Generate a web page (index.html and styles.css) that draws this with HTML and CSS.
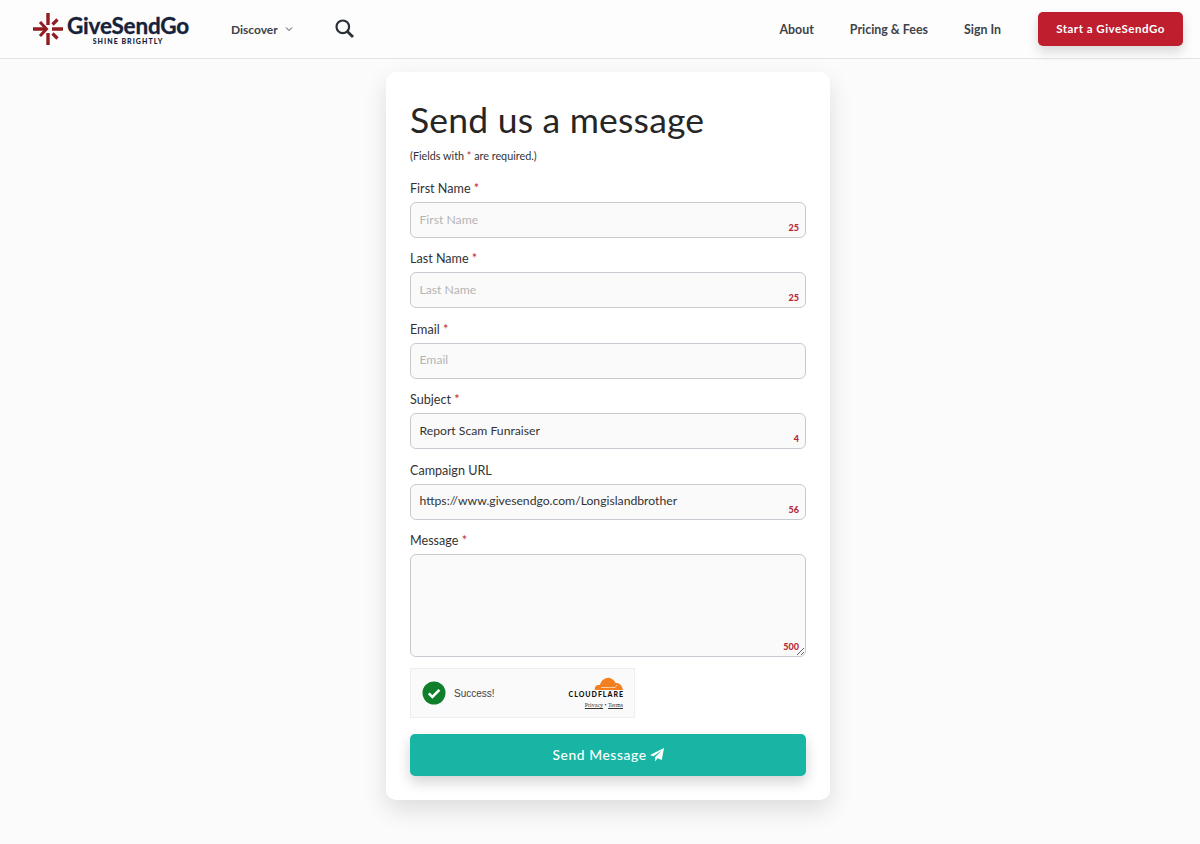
FILE: index.html
```html
<!DOCTYPE html>
<html lang="en">
<head>
    <meta charset="UTF-8">
    <meta name="viewport" content="width=device-width, initial-scale=1.0">
    <title>Contact - GiveSendGo</title>
    <link rel="stylesheet" href="styles.css">
</head>
<body>
    <nav class="navbar">
        <a class="logo" href="#">
            <svg class="logo-mark" width="32" height="32" viewBox="0 0 32 32">
                <g stroke="#8f1d22" fill="none">
                    <path d="M16 0V12M16 20V32" stroke-width="3.4"/>
                    <path d="M1 16H13M20 16H31" stroke-width="3.4"/>
                    <path d="M8 9L14.500 16L8 23" stroke-width="3"/>
                    <path d="M20.500 11.500L25.500 6.500M20.500 20.500L25.500 25.500" stroke-width="3.2"/>
                </g>
            </svg>
            <span class="logo-text">
                <span class="logo-name">GiveSendGo</span>
                <span class="logo-tag">SHINE BRIGHTLY</span>
            </span>
        </a>
        <a class="nav-link discover" href="#">
            Discover
            <svg width="8" height="6" viewBox="0 0 8 6"><path d="M1 1.5L4 4.5L7 1.5" fill="none" stroke="#444" stroke-width="1"/></svg>
        </a>
        <a class="search" href="#">
            <svg width="19" height="19" viewBox="0 0 19 19"><circle cx="7.800" cy="7.800" r="6.300" fill="none" stroke="#2b2f36" stroke-width="2.200"/><path d="M12.400 12.400L18 18" stroke="#2b2f36" stroke-width="2.800"/></svg>
        </a>
        <div class="nav-right">
            <a class="nav-link" href="#">About</a>
            <a class="nav-link" href="#">Pricing &amp; Fees</a>
            <a class="nav-link" href="#">Sign In</a>
            <a class="start-btn" href="#">Start a GiveSendGo</a>
        </div>
    </nav>

    <div class="content">
        <form class="card">
            <h1>Send us a message</h1>
            <p class="note">(Fields with <span class="req">*</span> are required.)</p>

            <div class="field">
                <label>First Name <span class="req">*</span></label>
                <input type="text" placeholder="First Name">
                <span class="count">25</span>
            </div>
            <div class="field">
                <label>Last Name <span class="req">*</span></label>
                <input type="text" placeholder="Last Name">
                <span class="count">25</span>
            </div>
            <div class="field">
                <label>Email <span class="req">*</span></label>
                <input type="text" placeholder="Email">
            </div>
            <div class="field">
                <label>Subject <span class="req">*</span></label>
                <input type="text" value="Report Scam Funraiser">
                <span class="count">4</span>
            </div>
            <div class="field">
                <label>Campaign URL</label>
                <input type="text" value="https://www.givesendgo.com/Longislandbrother">
                <span class="count">56</span>
            </div>
            <div class="field">
                <label>Message <span class="req">*</span></label>
                <textarea></textarea>
                <span class="count">500</span>
            </div>

            <div class="captcha">
                <svg width="24" height="24" viewBox="0 0 24 24"><circle cx="12" cy="12" r="11.5" fill="#0f7f2c"/><path d="M6.8 12.4L10.4 16L17.4 8.8" fill="none" stroke="#fff" stroke-width="2.6"/></svg>
                <span class="captcha-text">Success!</span>
                <div class="cf">
                    <svg width="30" height="13" viewBox="0 0 30 13"><path d="M2 13C1 9 4 7.500 7 8C8 3 13 0 17 1C20 2 22 4 22.500 6C26 5.500 29 8 30 13Z" fill="#f38020"/><path d="M8 10.500H22L24 8" fill="none" stroke="#fbe3c8" stroke-width="0.8"/></svg>
                    <span class="cf-name">CLOUDFLARE</span>
                    <span class="cf-links"><u>Privacy</u> &bull; <u>Terms</u></span>
                </div>
            </div>

            <button class="send-btn" type="button">
                Send Message
                <svg width="14" height="14" viewBox="0 0 14 14"><path d="M14 0L11.800 12L7.500 10.200L5.300 13.500L5 9.200L11.500 2.800L3.400 8.300L0 6.900Z" fill="#fff"/></svg>
            </button>
        </form>
    </div>
</body>
</html>
```

FILE: styles.css
```css
* {
    box-sizing: border-box;
}

body {
    margin: 0;
    background-color: #fbfbfb;
    font-family: 'Lato', 'Open Sans', sans-serif;
    color: #2b2b2b;
}

a {
    text-decoration: none;
}

.navbar {
    display: flex;
    align-items: center;
    height: 59px;
    padding: 0 17px 0 32px;
    background-color: #fdfdfd;
    border-bottom: 1px solid #e4e4e4;
}

.logo {
    display: flex;
    align-items: center;
    gap: 3px;
    width: 199px;
}

.logo-text {
    display: flex;
    flex-direction: column;
    align-items: center;
    padding-top: 3px;
}

.logo-name {
    font-size: 22.500px;
    line-height: 20px;
    font-weight: 700;
    letter-spacing: -0.2px;
    color: #16213a;
    -webkit-text-stroke: 0.3px #16213a;
}

.logo-tag {
    margin-top: 1px;
    font-size: 7px;
    line-height: 8px;
    font-weight: 900;
    letter-spacing: 1.050px;
    color: #16213a;
}

.nav-link {
    font-size: 12.400px;
    font-weight: 700;
    color: #3f4248;
}

.discover {
    display: flex;
    align-items: center;
    gap: 7px;
    width: 104px;
    font-size: 12px;
}

.search {
    display: flex;
    margin-top: -2px;
}

.nav-right {
    display: flex;
    align-items: center;
    gap: 36px;
    margin-left: auto;
}

.start-btn {
    width: 145px;
    height: 34px;
    margin-left: 1px;
    border-radius: 5px;
    background-color: #be1e2d;
    color: #fff;
    font-size: 11.500px;
    font-weight: 700;
    letter-spacing: 0.5px;
    line-height: 33px;
    text-align: center;
    box-shadow: 0 6px 12px rgba(0, 0, 0, 0.15);
}

.content {
    display: flex;
    justify-content: center;
    padding: 13px 0 44px 16px;
}

.card {
    width: 444px;
    height: 728px;
    padding: 24px;
    background-color: #fff;
    border-radius: 10px;
    box-shadow: 0 10px 25px rgba(0, 0, 0, 0.12);
}

.card h1 {
    margin: 0;
    font-size: 35.500px;
    line-height: 48px;
    font-weight: 400;
    letter-spacing: 0.2px;
    color: #262626;
}

.note {
    margin: 4px 0 12px;
    font-size: 10.800px;
    line-height: 16px;
    color: #333;
}

.req {
    color: #be1e2d;
}

.field {
    position: relative;
    margin-bottom: 8.400px;
}

.field label {
    display: block;
    height: 26px;
    font-size: 12.600px;
    line-height: 26px;
    color: #333;
}

.field input,
.field textarea {
    display: block;
    width: 100%;
    height: 36px;
    padding: 0 8.500px 2px;
    border: 1px solid #c9c9d2;
    border-radius: 6px;
    background-color: #fafafa;
    font-family: inherit;
    font-size: 12.200px;
    color: #333;
    outline: none;
}

.field input::placeholder {
    color: #b5b5b5;
}

.field textarea {
    height: 103px;
}

.count {
    position: absolute;
    right: 7px;
    bottom: 5px;
    font-size: 9px;
    line-height: 11px;
    font-weight: 900;
    color: #b52a3a;
}

.captcha {
    display: flex;
    align-items: center;
    width: 225px;
    height: 50px;
    margin-top: 11px;
    padding: 0 11px;
    background-color: #fafafa;
    border: 1px solid #eee;
}

.captcha-text {
    margin: 2px 0 0 8px;
    font-family: 'Liberation Sans', sans-serif;
    font-size: 10px;
    color: #444;
}

.cf {
    display: flex;
    flex-direction: column;
    align-items: flex-end;
    margin-left: auto;
}

.cf-name {
    font-size: 7px;
    line-height: 9px;
    font-weight: 900;
    letter-spacing: 1px;
    color: #111;
    margin-right: -1px;
}

.cf-links {
    margin-top: 2px;
    font-family: 'Liberation Serif', serif;
    font-size: 6px;
    line-height: 8px;
    color: #333;
}

.send-btn {
    display: flex;
    align-items: center;
    justify-content: center;
    gap: 3px;
    width: 100%;
    height: 42px;
    margin-top: 16px;
    border: none;
    border-radius: 5px;
    background-color: #18b5a4;
    color: #fff;
    font-family: inherit;
    font-size: 13.800px;
    font-weight: 500;
    letter-spacing: 0.6px;
    box-shadow: 0 6px 14px rgba(0, 0, 0, 0.18);
}
```
